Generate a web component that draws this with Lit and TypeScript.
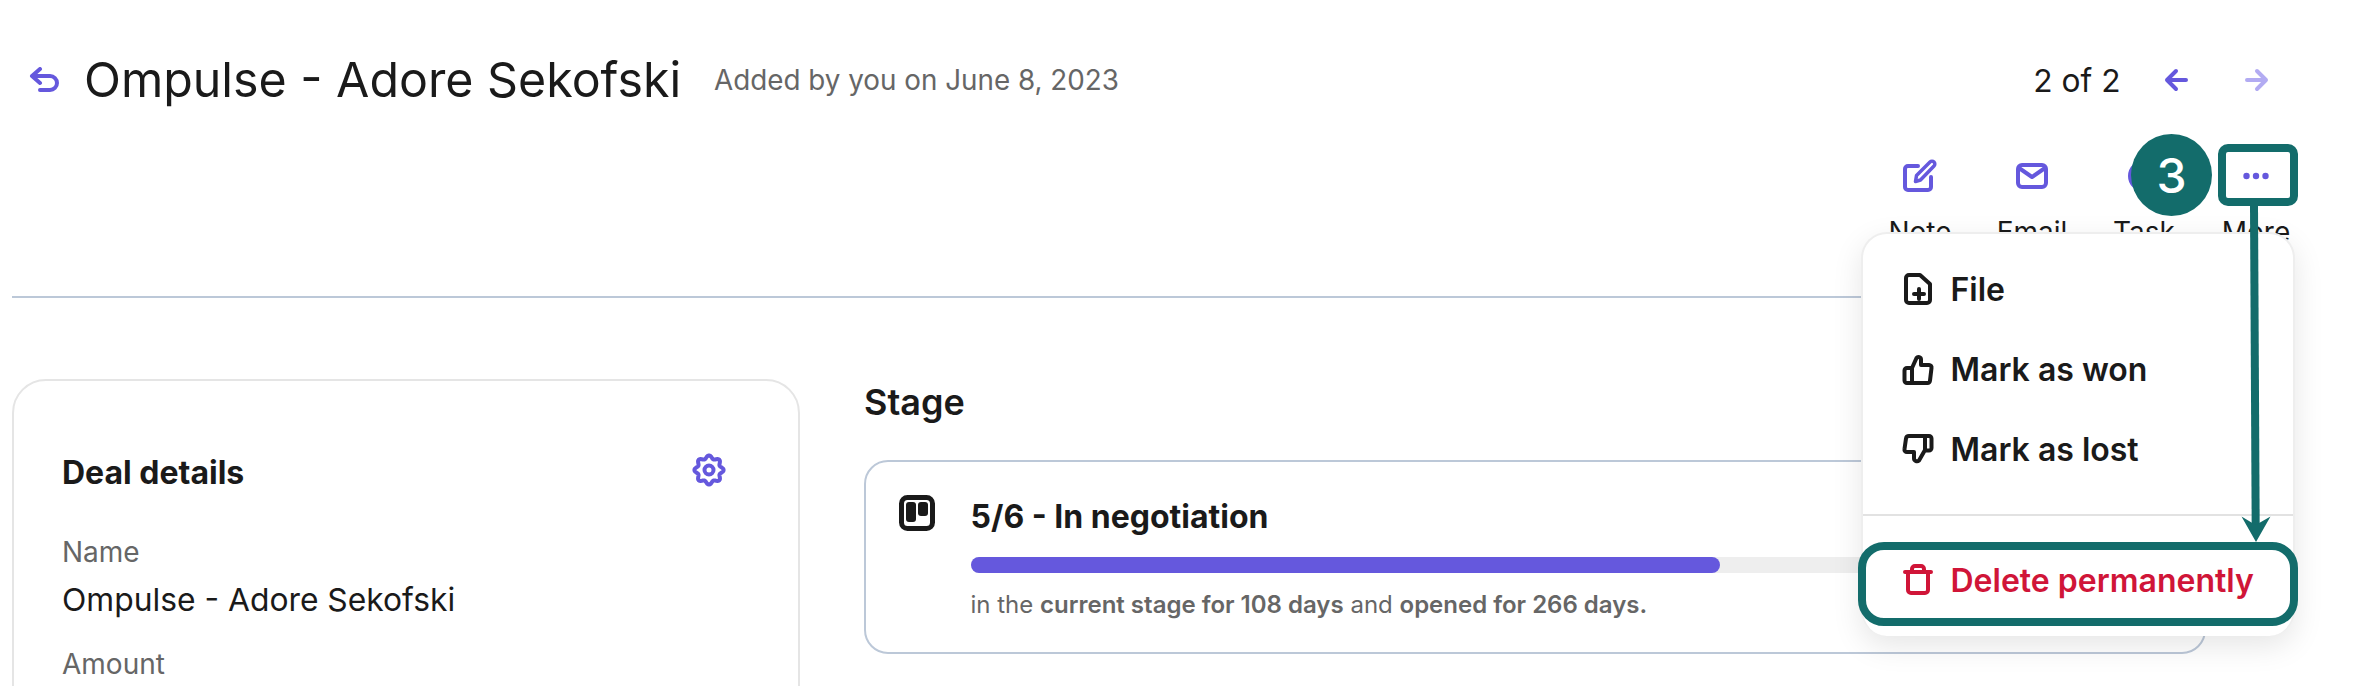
import { LitElement, html, css, svg } from "lit";
import { customElement } from "lit/decorators.js";

const gearPath = (() => {
  const pts: string[] = [];
  for (let i = 0; i < 96; i++) {
    const t = (i / 96) * Math.PI * 2;
    const r = 13 + 1.6 * Math.cos(8 * t);
    pts.push(`${(18 + r * Math.sin(t)).toFixed(2)} ${(18 - r * Math.cos(t)).toFixed(2)}`);
  }
  return "M" + pts.join("L") + "Z";
})();

const ic = (w: number, h: number, body: unknown, cls = "") =>
  html`<svg class="ic ${cls}" width=${w} height=${h} viewBox="0 0 ${w} ${h}" fill="none" stroke="currentColor" stroke-width="4" stroke-linecap="round" stroke-linejoin="round">${body}</svg>`;

const icons = {
  back: () => ic(30, 26, svg`<path d="M11 2L3 9L11 16M3 9H21a7 7 0 0 1 0 14H11"/>`),
  left: () => ic(24, 24, svg`<path d="M22 12H3M12 3L3 12L12 21"/>`),
  right: () => ic(24, 24, svg`<path d="M2 12H21M12 3L21 12L12 21"/>`),
  note: () => ic(34, 34, svg`<path d="M15 7H5a3 3 0 0 0-3 3V28a3 3 0 0 0 3 3H25a3 3 0 0 0 3-3V18"/><path stroke-width="3.5" d="M12.5 22.5l1-6L27 3a2.8 2.8 0 0 1 4 4L17.5 21z"/>`),
  email: () => ic(32, 26, svg`<rect x="2" y="2" width="28" height="22" rx="4"/><path d="M3 5L16 14L29 5"/>`),
  task: () => ic(32, 32, svg`<circle cx="16" cy="16" r="14"/><path d="M10 16l4 4l8-8"/>`),
  more: () => html`<svg class="ic" width="32" height="32" viewBox="0 0 32 32" fill="currentColor"><circle cx="6.5" cy="16" r="3.2"/><circle cx="16" cy="16" r="3.2"/><circle cx="25.5" cy="16" r="3.2"/></svg>`,
  gear: () => ic(36, 36, svg`<path d=${gearPath}/><circle cx="18" cy="18" r="4.5"/>`),
  board: () => html`<svg class="ic" width="36" height="36" viewBox="0 0 36 36" fill="none"><rect x="2.5" y="2.5" width="31" height="31" rx="6" stroke="currentColor" stroke-width="5"/><rect x="7" y="7" width="10" height="20" rx="3" fill="currentColor"/><rect x="19" y="7" width="10" height="14" rx="3" fill="currentColor"/></svg>`,
  file: () => ic(30, 34, svg`<path d="M6 3H17L27 12V28a3 3 0 0 1-3 3H6a3 3 0 0 1-3-3V6a3 3 0 0 1 3-3z"/><path d="M11 22H21M16 17V27"/>`),
  up: () => ic(32, 32, svg`<path d="M10 15L14.5 5a2.5 2.5 0 0 1 4.5 1.5V12H27a2.5 2.5 0 0 1 2.5 3L28 27.5a2.5 2.5 0 0 1-2.5 2.5H10M10 15H5a2.5 2.5 0 0 0-2.5 2.5V27.5A2.5 2.5 0 0 0 5 30H10M10 15V30"/>`),
  down: () => ic(32, 34, svg`<path d="M23 4H7a3 3 0 0 0-3 2.5L2.5 17a2.5 2.5 0 0 0 2.5 3H12V26a3 3 0 0 0 5 2.5L23 18M23 4h4a2.5 2.5 0 0 1 2.5 2.5V16a2.5 2.5 0 0 1-2.5 2.5H23V4"/>`),
  trash: () => ic(30, 34, svg`<path d="M2 9H28M9 9V6a3 3 0 0 1 3-3H18a3 3 0 0 1 3 3V9M5 9V27a3 3 0 0 0 3 3H22a3 3 0 0 0 3-3V9"/>`),
};

@customElement("app-root")
export class AppRoot extends LitElement {
  static styles = css`
    :host {
      display: block;
      position: relative;
      width: 2360px;
      height: 686px;
      overflow: hidden;
      background: #fff;
      color: #1a1a1a;
      font-family: Inter, "Liberation Sans", sans-serif;
    }
    .ic { display: block; flex: none; }
    .top { display: flex; align-items: center; height: 56px; padding: 52px 91px 0 29px; }
    .back { color: #6558dd; margin-right: 25px; }
    h1 { margin: 0; font-size: 48.3px; font-weight: 400; line-height: 56px; letter-spacing: 0; }
    .added { margin-left: 33px; font-size: 27.8px; color: #666; line-height: 40px; }
    .pager { margin-left: auto; display: flex; align-items: center; font-size: 31.7px; }
    .pager .l { color: #6558dd; margin-left: 43.5px; }
    .pager .r { color: #b2abf2; margin-left: 57px; }
    .actions { display: flex; justify-content: flex-end; margin-top: 52px; padding-right: 48px; }
    .action { width: 112px; display: flex; flex-direction: column; align-items: center; color: #6558dd; }
    .action .icb { height: 32px; display: flex; align-items: center; }
    .action span { margin-top: 22px; font-size: 28px; line-height: 36px; color: #1a1a1a; }
    .rule { height: 2px; background: #bcc8d8; margin: 46px 70px 0 12px; }
    .content { display: flex; gap: 64px; margin: 81px 0 0 12px; }
    .deal { width: 788px; height: 400px; box-sizing: border-box; border: 2px solid #e5e5e5; border-radius: 34px; padding: 71px 71px 0 48px; flex: none; }
    .deal-h { display: flex; align-items: center; justify-content: space-between; height: 40px; }
    .deal-h b { font-size: 32px; font-weight: 700; }
    .gear { color: #6558dd; margin-top: -4px; }
    .lab { font-size: 28px; line-height: 36px; color: #666; }
    .val { font-size: 31.8px; line-height: 36px; margin-top: 12px; }
    .lab.name { margin-top: 42px; }
    .lab.amount { margin-top: 28px; }
    .stage { width: 1342px; flex: none; }
    h2 { margin: 1px 0 36px; font-size: 36px; font-weight: 600; line-height: 44px; }
    .scard { display: flex; gap: 35.5px; box-sizing: border-box; height: 194px; border: 2px solid #bcc8d8; border-radius: 24px; padding: 33px 34px 0 33px; }
    .scard .board { color: #1a1a1a; }
    .sbody { flex: 1; }
    .stitle { font-size: 32px; font-weight: 700; line-height: 44px; }
    .track { height: 16px; margin-top: 18px; border-radius: 8px; background: #eee; }
    .fill { height: 100%; border-radius: 8px; background: #6558dd; }
    .meta { margin-top: 14px; font-size: 24px; line-height: 36px; color: #666; }
    .meta b { font-weight: 600; }
    .menu { position: absolute; left: 1861px; top: 232px; width: 434px; height: 404px; box-sizing: border-box; background: #fff; border: 2px solid #eee; border-bottom: none; border-radius: 26px; box-shadow: 0 10px 30px rgba(0,0,0,.1); padding-top: 15px; }
    .item { display: flex; align-items: center; height: 80px; font-size: 32px; font-weight: 600; }
    .item .icw { width: 30px; margin: 0 17.5px 0 40px; display: flex; justify-content: center; }
    .msep { height: 2px; background: #e2e2e2; margin: 25px 0 24px; }
    .del { color: #d01538; }
    .mark { position: absolute; box-sizing: border-box; border: 8px solid #136c6b; }
    .mark.more { left: 2218px; top: 144px; width: 80px; height: 62px; border-radius: 10px; }
    .mark.delete { left: 1858px; top: 542px; width: 440px; height: 84px; border-radius: 26px; }
    .badge { position: absolute; left: 2131px; top: 134px; width: 81px; height: 82px; border-radius: 50%; background: #136c6b; color: #fff; font-size: 48px; font-weight: 500; display: flex; align-items: center; justify-content: center; }
    .arrow { position: absolute; left: 2236px; top: 206px; }
  `;

  render() {
    return html`
      <div class="top">
        <span class="back">${icons.back()}</span>
        <h1>Ompulse - Adore Sekofski</h1>
        <span class="added">Added by you on June 8, 2023</span>
        <div class="pager">
          <span>2 of 2</span>
          <span class="l">${icons.left()}</span>
          <span class="r">${icons.right()}</span>
        </div>
      </div>
      <div class="actions">
        ${[["Note", icons.note], ["Email", icons.email], ["Task", icons.task], ["More", icons.more]].map(
          ([t, i]) => html`<div class="action"><div class="icb">${(i as () => unknown)()}</div><span>${t}</span></div>`
        )}
      </div>
      <div class="rule"></div>
      <div class="content">
        <section class="deal">
          <div class="deal-h"><b>Deal details</b><span class="gear">${icons.gear()}</span></div>
          <div class="lab name">Name</div>
          <div class="val">Ompulse - Adore Sekofski</div>
          <div class="lab amount">Amount</div>
        </section>
        <section class="stage">
          <h2>Stage</h2>
          <div class="scard">
            <span class="board">${icons.board()}</span>
            <div class="sbody">
              <div class="stitle">5/6 - In negotiation</div>
              <div class="track"><div class="fill" style="width: ${(750 / 1200) * 100}%"></div></div>
              <div class="meta">in the <b>current stage for 108 days</b> and <b>opened for 266 days.</b></div>
            </div>
          </div>
        </section>
      </div>
      <div class="menu">
        <div class="item"><span class="icw">${icons.file()}</span>File</div>
        <div class="item"><span class="icw">${icons.up()}</span>Mark as won</div>
        <div class="item"><span class="icw">${icons.down()}</span>Mark as lost</div>
        <div class="msep"></div>
        <div class="item del"><span class="icw">${icons.trash()}</span>Delete permanently</div>
      </div>
      <div class="badge">3</div>
      <div class="mark more"></div>
      <div class="mark delete"></div>
      <svg class="arrow" width="40" height="340" viewBox="0 0 40 340" fill="#136c6b">
        <path d="M18 0L19.7 322" stroke="#136c6b" stroke-width="8" fill="none"/>
        <path d="M5.5 310.5L19.7 319L34.5 310.5L20 336z"/>
      </svg>
    `;
  }
}
